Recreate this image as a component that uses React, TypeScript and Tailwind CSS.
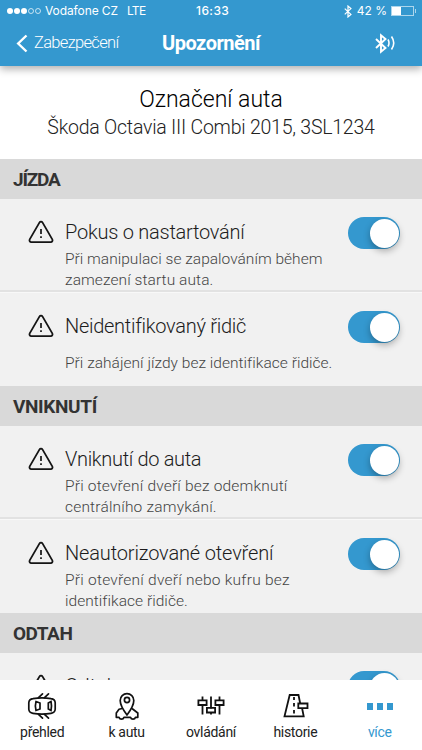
import type { ReactNode } from "react";

function WarningIcon() {
  return (
    <svg width="26" height="24" viewBox="0 0 26 24" fill="none" stroke="#151515" strokeLinecap="round" strokeLinejoin="round">
      <path d="M11.4 2.6 1.7 19.400a1.800 1.800 0 0 0 1.600 2.700h19.400a1.800 1.800 0 0 0 1.600-2.700L14.600 2.600a1.850 1.850 0 0 0-3.200 0Z" strokeWidth="1.800" />
      <path d="M13 9v5M13 16.300v1.700" strokeWidth="1.700" strokeLinecap="butt" />
    </svg>
  );
}

function Toggle() {
  return (
    <div className="flex h-8 w-[52px] shrink-0 items-center justify-end rounded-full bg-[#3498cf] pr-[1.5px]">
      <div className="h-[29px] w-[29px] rounded-full bg-white shadow-[0_3px_7px_rgba(0,0,0,0.3)]" />
    </div>
  );
}

function SectionHeader({ children, tracking }: { children: ReactNode; tracking: string }) {
  return (
    <div className={`h-10 shrink-0 bg-[#d9d9d9] pl-[13px] pt-px text-[19px] font-bold leading-10 text-[#333] ${tracking}`}>{children}</div>
  );
}

interface RowProps {
  title: string;
  titleTracking: string;
  lines: { text: string; tracking: string }[];
  divider?: boolean;
  spaced?: boolean;
}

function Row({ title, titleTracking, lines, divider, spaced }: RowProps) {
  return (
    <div
      className={`flex shrink-0 items-start pl-[28px] pr-[22px] pt-[18px] ${
        divider ? "h-[93px] border-b-2 border-[#e2e2e2]" : "h-[94px] border-t border-[#f8f8f8]"
      }`}
    >
      <div className="mt-[3px] w-[37px] shrink-0">
        <WarningIcon />
      </div>
      <div className="min-w-0 flex-1 whitespace-nowrap pt-[3px]">
        <div className={`text-[20px] font-light leading-6 text-[#1c1c1c] ${titleTracking}`}>{title}</div>
        <div className={`text-[15.5px] font-light leading-[21px] text-[#444] ${spaced ? "mt-[15px]" : "mt-[5px]"}`}>
          {lines.map((l) => (
            <div key={l.text} className={l.tracking}>
              {l.text}
            </div>
          ))}
        </div>
      </div>
      <Toggle />
    </div>
  );
}

function BluetoothGlyph({ className }: { className: string }) {
  return (
    <svg className={className} viewBox="0 0 12 20" fill="none" stroke="white" strokeWidth="1.900">
      <path d="M1 5.500 10.500 14.500 6 18.300V1.700L10.500 5.500 1 14.500" />
    </svg>
  );
}

function CarIcon() {
  return (
    <svg width="30" height="28" viewBox="0 0 30 28" fill="none" stroke="#111" strokeWidth="1.700" strokeLinecap="round">
      <path d="M6 6.700q9-1.600 18 0 4 .6 4.200 4v6.600q-.2 3.400-4.200 4-9 1.600-18 0-4-.6-4.200-4v-6.600q.2-3.400 4.200-4Z" />
      <path d="M9 9.500 13 11v6l-4 1.500q-1.300-4.500 0-9ZM24 9.500 21.300 11v6l2.700 1.500q1-4.500 0-9Z" />
      <path d="M11.500 5.600 15.500 1.800M17.500 5.600l4-3.800M11.500 22.400l4 3.800M17.500 22.400l4 3.800" />
    </svg>
  );
}

function PinIcon() {
  return (
    <svg width="28" height="30" viewBox="0 0 28 30" fill="none" stroke="#111" strokeWidth="1.700" strokeLinejoin="round">
      <path d="M14 24q-6.800-9-6.800-14.500a6.800 6.800 0 0 1 13.600 0Q20.800 15 14 24Z" />
      <circle cx="14" cy="9" r="2.600" />
      <path d="M9.200 17.500 6 18.300 3.300 22v4.300H6a2.600 2.600 0 0 0 5 0h6.500a2.600 2.600 0 0 0 5 0h2.300V22L19 17.500" />
    </svg>
  );
}

function SlidersIcon() {
  return (
    <svg width="28" height="24" viewBox="0 0 28 24" fill="none" stroke="#111" strokeWidth="1.800">
      <path d="M5.500 2.500v3.500M5.500 11v9.500M14 2.500v12M14 18.500v2M22.500 2.500v3.500M22.500 11v9.500" />
      <path d="M1.400 6.300h8.200v4.700H1.400ZM9.900 13.800h8.200v4.700H9.900ZM18.400 6.300h8.200v4.700h-8.200Z" />
    </svg>
  );
}

function RoadIcon() {
  return (
    <svg width="28" height="26" viewBox="0 0 28 26" fill="none" stroke="#111" strokeWidth="1.800">
      <path d="M19.200 10.500 17.500 2H8.700L3.500 23.300h19.200l-1.600-8" />
      <path d="M17.300 10.500h9.200v4.600h-9.200Z" />
      <path d="M13 4v3M13 10v3.500M13 17v3.500" />
    </svg>
  );
}

function Tab({ icon, label, className }: { icon: ReactNode; label: string; className: string }) {
  return (
    <div className="flex flex-col items-center">
      <div className="flex h-[30px] items-center">{icon}</div>
      <div className={`mt-[2px] whitespace-nowrap text-[14px] leading-[18px] tracking-[-0.3px] ${className}`}>{label}</div>
    </div>
  );
}

export default function App() {
  return (
    <div className="flex h-[750px] w-[422px] flex-col overflow-hidden bg-white font-['Roboto',sans-serif]">
      <header className="z-10 h-[66px] shrink-0 bg-[#3498cf] text-white shadow-[0_3px_8px_rgba(0,0,0,0.32)]">
        <div className="flex h-[22px] items-center pl-[7px] pr-[6px] font-['Inter',sans-serif] text-[12px]">
          <div className="flex w-[189px] items-center">
            <div className="flex gap-[1px]">
              {[1, 1, 1, 0, 0].map((on, i) => (
                <span key={i} className={`h-[6px] w-[6px] rounded-full ${on ? "bg-white" : "border border-white/70"}`} />
              ))}
            </div>
            <span className="ml-[4px] tracking-[-0.1px]">Vodafone CZ</span>
            <span className="ml-[9px] tracking-[-0.7px]">LTE</span>
          </div>
          <span className="font-medium tracking-[0.4px]">16:33</span>
          <div className="ml-auto flex items-center">
            <BluetoothGlyph className="mr-[5px] h-[13px] w-[8px]" />
            <span>42 %</span>
            <div className="ml-[4px] h-[10px] w-[23px] border border-white/60">
              <div className="h-full w-[9px] bg-white" />
            </div>
            <span className="ml-[1px] h-[4px] w-[1px] bg-white/60" />
          </div>
        </div>
        <div className="grid h-[42px] grid-cols-[1fr_auto_1fr] items-center">
          <div className="flex items-center pl-[16px]">
            <svg width="12" height="19" viewBox="0 0 12 19" fill="none" stroke="white" strokeWidth="2.400">
              <path d="M10.500 1.500 2.200 9.500l8.300 8" />
            </svg>
            <span className="ml-[6px] text-[16.500px] font-light tracking-[-0.68px]">Zabezpečení</span>
          </div>
          <h1 className="text-[20px] font-bold tracking-[-0.5px]">Upozornění</h1>
          <div className="flex items-center justify-end pr-[27px]">
            <BluetoothGlyph className="h-[21px] w-[12px]" />
            <svg width="8" height="18" viewBox="0 0 8 18" fill="none" stroke="white" strokeWidth="1.600">
              <path d="M1 5.500q2 3.500 0 7M4.500 2.500q4.500 6.500 0 13" />
            </svg>
          </div>
        </div>
      </header>

      <div className="flex h-[93px] shrink-0 flex-col items-center whitespace-nowrap pt-[19px]">
        <div className="text-[23px] leading-[29px] font-light text-black">Označení auta</div>
        <div className="text-[19.500px] leading-[28px] font-light tracking-[-0.23px] text-[#222]">Škoda Octavia III Combi 2015, 3SL1234</div>
      </div>

      <main className="flex min-h-0 flex-1 flex-col overflow-hidden bg-[#f1f1f1]">
        <SectionHeader tracking="tracking-[-1.2px]">JÍZDA</SectionHeader>
        <Row
          title="Pokus o nastartování"
          titleTracking="tracking-[-0.25px]"
          divider
          lines={[
            { text: "Při manipulaci se zapalováním během", tracking: "tracking-[0.02px]" },
            { text: "zamezení startu auta.", tracking: "tracking-[0.08px]" },
          ]}
        />
        <Row
          title="Neidentifikovaný řidič"
          titleTracking="tracking-[-0.28px]"
          spaced
          lines={[{ text: "Při zahájení jízdy bez identifikace řidiče.", tracking: "tracking-[0.03px]" }]}
        />
        <SectionHeader tracking="tracking-[-0.35px]">VNIKNUTÍ</SectionHeader>
        <Row
          title="Vniknutí do auta"
          titleTracking="tracking-[-0.33px]"
          divider
          lines={[
            { text: "Při otevření dveří bez odemknutí", tracking: "tracking-[0.19px]" },
            { text: "centrálního zamykání.", tracking: "tracking-[0.19px]" },
          ]}
        />
        <Row
          title="Neautorizované otevření"
          titleTracking="tracking-[-0.15px]"
          lines={[
            { text: "Při otevření dveří nebo kufru bez", tracking: "tracking-[0.24px]" },
            { text: "identifikace řidiče.", tracking: "tracking-[0.04px]" },
          ]}
        />
        <SectionHeader tracking="tracking-[-0.5px]">ODTAH</SectionHeader>
        <Row title="Odtah" titleTracking="tracking-[0px]" divider lines={[]} />
      </main>

      <nav className="grid h-[70px] shrink-0 grid-cols-5 bg-white pt-[11px]">
        <Tab icon={<CarIcon />} label="přehled" className="text-[#222]" />
        <Tab icon={<PinIcon />} label="k autu" className="text-[#222]" />
        <Tab icon={<SlidersIcon />} label="ovládání" className="text-[#222]" />
        <Tab icon={<RoadIcon />} label="historie" className="text-[#222]" />
        <Tab
          icon={
            <div className="flex gap-[4px]">
              <span className="h-[7px] w-[6px] bg-[#3498cf]" />
              <span className="h-[7px] w-[6px] bg-[#3498cf]" />
              <span className="h-[7px] w-[6px] bg-[#3498cf]" />
            </div>
          }
          label="více"
          className="text-[#3498cf]"
        />
      </nav>
    </div>
  );
}
